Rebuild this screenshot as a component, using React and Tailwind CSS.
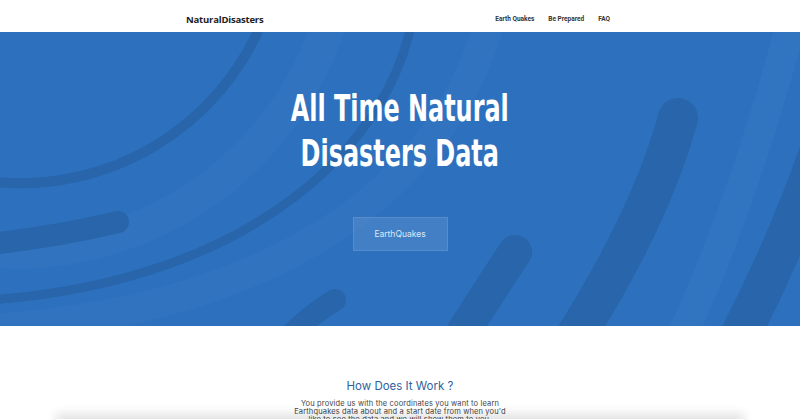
import React from 'react';

const Waves = () => (
    <svg className="absolute inset-0 w-full h-full" viewBox="0 32 800 294" preserveAspectRatio="none" fill="none">
        {/* faint lighter bands */}
        <path d="M 330 20 A 330 330 0 0 1 -20 250" stroke="#ffffff" strokeOpacity="0.02" strokeWidth="34" />
        <path d="M 490 20 C 450 170 300 310 -20 330" stroke="#ffffff" strokeOpacity="0.02" strokeWidth="30" />
        <path d="M 792 20 Q 745 200 680 340" stroke="#ffffff" strokeOpacity="0.025" strokeWidth="30" />

        {/* darker strokes */}
        <g stroke="#2865aa" strokeLinecap="round">
            <path d="M 262 22 A 262 262 0 0 1 -5 182" strokeWidth="10" />
            <path d="M 412 20 C 390 140 260 280 -10 300" strokeWidth="9" />
            <path d="M 118 222 Q 60 236 -10 244" strokeWidth="22" />
            <path d="M 335 300 Q 310 315 285 340" strokeWidth="22" />
            <path d="M 678 118 Q 650 220 570 345" strokeWidth="40" />
            <path d="M 515 252 Q 490 290 455 345" strokeWidth="34" />
            <path d="M 820 150 Q 785 250 735 345" strokeWidth="40" />
        </g>
    </svg>
);

export default function App() {
    return (
        <div className="min-h-screen bg-white font-['Noto_Sans',sans-serif]">
            {/* Nav */}
            <nav className="h-8 bg-white">
                <div className="w-[424px] ml-[186px] h-full flex items-center justify-between pt-[8px]">
                    <span className="text-[9.5px] font-bold text-[#222] tracking-[-0.2px] font-['Open_Sans',sans-serif]">NaturalDisasters</span>
                    <div className="flex items-center gap-[14px] text-[6.5px] font-bold text-[#333] font-['Roboto',sans-serif]">
                        <a href="#">Earth Quakes</a>
                        <a href="#">Be Prepared</a>
                        <a href="#">FAQ</a>
                    </div>
                </div>
            </nav>

            {/* Hero */}
            <header className="relative h-[294px] bg-[#2d71be] overflow-hidden">
                <Waves />
                <div className="relative flex flex-col items-center pt-[54px]">
                    <h1 className="text-white text-center font-bold text-[38px] leading-[45px] font-['DejaVu_Sans_Condensed',sans-serif] scale-x-[0.7]">
                        All Time Natural<br />Disasters Data
                    </h1>
                    <button
                        type="button"
                        className="mt-[41px] w-[95px] h-[34px] bg-white/10 border border-white/10 text-[#dce9f8] text-[8.5px] font-['Inter',sans-serif]"
                    >
                        EarthQuakes
                    </button>
                </div>
            </header>

            {/* How it works */}
            <section className="flex flex-col items-center pt-[52px]">
                <h2 className="text-[11.5px] text-[#2f5f9e] font-['Inter',sans-serif]">How Does It Work ?</h2>
                <p className="mt-[5px] w-[215px] text-center text-[7.5px] leading-[8px] tracking-[0.15px] text-[#444] font-['Inter',sans-serif]">
                    You provide us with the coordinates you want to learn Earthquakes data about and a start date from when you'd like to see the data and we will show them to you.
                </p>
            </section>

            {/* floating bar at the bottom */}
            <div className="fixed left-[56px] right-[56px] top-[419px] h-10 bg-white shadow-[0_-5px_10px_rgba(0,0,0,0.12)]" />
        </div>
    );
}
